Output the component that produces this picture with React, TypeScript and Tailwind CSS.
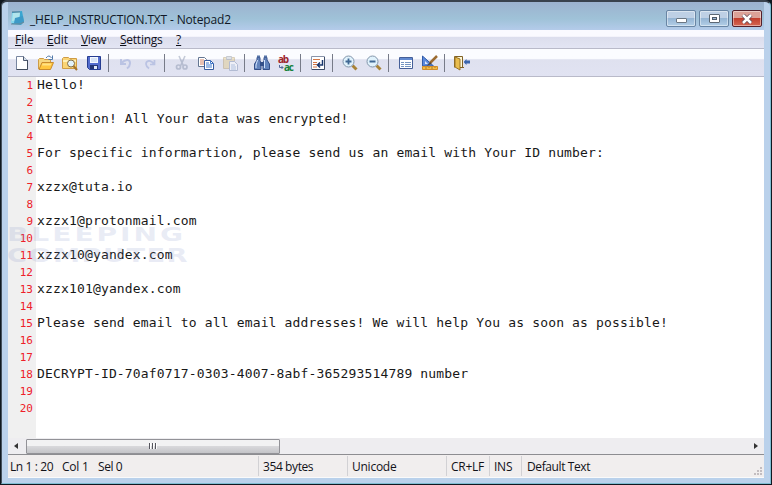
import type { ReactNode } from 'react';

const ui = "font-['Open_Sans','Noto_Sans',sans-serif]";
const mono = "font-['DejaVu_Sans_Mono','Liberation_Mono',monospace]";

const lines = [
  'Hello!', '', 'Attention! All Your data was encrypted!', '',
  'For specific informartion, please send us an email with Your ID number:', '',
  'xzzx@tuta.io', '', 'xzzx1@protonmail.com', '', 'xzzx10@yandex.com', '',
  'xzzx101@yandex.com', '',
  'Please send email to all email addresses! We will help You as soon as possible!',
  '', '', 'DECRYPT-ID-70af0717-0303-4007-8abf-365293514789 number', '', '',
];

function Tool({ children, faded }: { children: ReactNode; faded?: boolean }) {
  return (
    <div className={`flex w-6 shrink-0 items-center justify-center ${faded ? 'opacity-45' : ''}`}>
      <svg width="16" height="16" viewBox="0 0 16 16" fill="none" className="overflow-visible">{children}</svg>
    </div>
  );
}

function Sep() {
  return <div className="flex w-2 shrink-0 pl-[2px]"><div className="h-[18px] w-px bg-[#777b88]" /></div>;
}

function Toolbar() {
  return (
    <div className="flex h-[28px] shrink-0 items-center border-b border-[#b9bac9] bg-linear-to-b from-[#fbfcff] from-35% via-[#dfe1ef] via-40% to-[#e1e3f2] pt-px pl-[2px]">
      <Tool>
        <path d="M2.500 1.500h7l4 4v9h-11z" fill="#fff" stroke="#7886a0" />
        <path d="M9.500 1.500v4h4" fill="#d5dfeb" stroke="#4e5970" />
        <path d="M13.500 5v9.500h-11" stroke="#414b5d" />
      </Tool>
      <Tool>
        <path d="M.5 14V4.500l1-1h4l1 1h6V7" fill="#f6d780" stroke="#cf9c45" />
        <path d="M1 14.500 4 7.500h11.500l-3 7z" fill="#ffc63e" stroke="#c98b2e" />
        <path d="M4.500 8.500h9l-1 2H4z" fill="#ffe286" />
        <path d="M8 3q3-4 5.500 0M14.500.5v4h-4" stroke="#537baa" />
      </Tool>
      <Tool>
        <path d="M.5 13.500v-10l1-1h5l1 1h7v10z" fill="#fad475" stroke="#cf9c45" />
        <path d="M1 5h13v2H1z" fill="#fff0b5" />
        <circle cx="9" cy="8.500" r="3.500" fill="#e2f3fc" stroke="#836b42" />
        <path d="m11.500 11 3.500 4" stroke="#a6752b" strokeWidth="2" />
      </Tool>
      <Tool>
        <path d="M1.500 1.500h13v13h-11l-2-2z" fill="#526cce" stroke="#263d91" />
        <path d="M4 2h8v6H4z" fill="#f4f8ff" />
        <path d="M5 4h6M5 6h6" stroke="#b8cceb" />
        <path d="M4 10h8v4H4z" fill="#233574" />
        <path d="M8 11h3v3H8z" fill="#dfe8f8" />
      </Tool>
      <Sep />
      <Tool faded>
        <path d="M3 4v5h5M3.500 8C8 3.500 12.500 4.500 12 8.500c0 2-1 3.500-3 5" stroke="#8f9fd5" strokeWidth="2" />
      </Tool>
      <Tool faded>
        <path d="M12.500 5v4.500H8M12 9C8.500 4 4 5.500 4 9c0 2 1 3 3 4.500" stroke="#8f9fd5" strokeWidth="1.700" />
      </Tool>
      <Sep />
      <Tool faded>
        <path d="m5 1 4.500 10M11 1 6.500 11" stroke="#8490aa" strokeWidth="1.600" />
        <circle cx="4.500" cy="12" r="2" stroke="#8490aa" strokeWidth="1.700" />
        <circle cx="11" cy="12" r="2" stroke="#8490aa" strokeWidth="1.700" />
      </Tool>
      <Tool>
        <path d="M.5 2.500h6l2 2v7h-8z" fill="#fff" stroke="#647692" />
        <path d="M2 5h4M2 7h4M2 9h4" stroke="#d28264" />
        <path d="M6.500 5.500h6l3 3v6h-9z" fill="#fff" stroke="#365b9e" />
        <path d="M12.500 5.500v3h3M8 8h3M8 10h6M8 12h6" stroke="#427bce" />
      </Tool>
      <Tool faded>
        <path d="M1.500 2.500h11v11h-11z" fill="#e2c987" stroke="#b39b6a" />
        <path d="M4.500 1.500h5v3h-5z" fill="#bdc4ce" stroke="#888e98" />
        <path d="M7.500 6.500h5l3 3v6h-8z" fill="#fff" stroke="#7b8daf" />
        <path d="M9 10h4M9 12h5M9 14h5" stroke="#7b9bc9" />
      </Tool>
      <Sep />
      <Tool>
        <path d="M3 2.500h3v3l1 3v6H.5V9L3 5zM10 2.500h3V5l2.500 4v5.500H9v-6l1-3z" fill="#6384bd" stroke="#344f89" />
        <path d="M6 7h4v4H6z" fill="#344f89" />
        <path d="M3.500 5 2 10v3M10.500 5v8" stroke="#d2e4ff" />
        <path d="M3 1.500h3M10 1.500h3" stroke="#5674a8" strokeWidth="2" />
      </Tool>
      <Tool>
        <text x="0" y="8" fontSize="10" fontWeight="700" fill="#9e242c" textLength="11" className={ui}>ab</text>
        <text x="6" y="15.500" fontSize="10" fontWeight="700" fill="#16813b" textLength="10" className={ui}>ac</text>
        <path d="M1.500 10v2.500H5M3.500 11 5 12.500 3.500 14" stroke="#526998" />
      </Tool>
      <Sep />
      <Tool>
        <path d="M1.500 1.500h13v13h-13z" fill="#fff" stroke="#8994aa" />
        <path d="M14.500 2v12.500H2" stroke="#3e4c68" />
        <path d="M3 4.500h7M3 7.500h4M3 9.500h4M3 12h4" stroke="#d57746" />
        <path d="M12.500 5v5H8M10 7.500 7.500 10l2.500 2.500" stroke="#18366e" strokeWidth="1.500" />
      </Tool>
      <Sep />
      <Tool>
        <path d="m10.500 10.500 4 4" stroke="#a88337" strokeWidth="3" />
        <circle cx="6.500" cy="6.500" r="5.500" fill="#e0f2fc" stroke="#8295aa" />
        <path d="M3.500 6.500h6M6.500 3.500v6" stroke="#3f6894" strokeWidth="1.800" />
      </Tool>
      <Tool>
        <path d="m10.500 10.500 4 4" stroke="#a88337" strokeWidth="3" />
        <circle cx="6.500" cy="6.500" r="5.500" fill="#e0f2fc" stroke="#8295aa" />
        <path d="M3.500 6.500h6" stroke="#3f6894" strokeWidth="1.800" />
      </Tool>
      <Sep />
      <Tool>
        <path d="M1.500 2.500h13v11h-13z" fill="#fff" stroke="#455f98" />
        <path d="M2 3h12v2H2z" fill="#6189d0" />
        <path d="M3 7.500h3M3 9.500h3M3 11.500h3M7 7.500h6M7 9.500h6M7 11.500h6" stroke="#7595c1" />
      </Tool>
      <Tool>
        <path d="M.5 1v10h11z" fill="#5b89dc" stroke="#315ba9" />
        <path d="M3 6v3h3z" fill="#dce8fc" />
        <path d="m15 1-7 7" stroke="#9b6b31" strokeWidth="2.500" />
        <path d="m8.500 7-4 4 5-2z" fill="#514535" />
        <path d="M.5 11.500h15v3H.5z" fill="#f5bc42" stroke="#cf8c2c" />
        <path d="M4 12v2M7 12v1M10 12v2M13 12v1" stroke="#a57b35" />
      </Tool>
      <Sep />
      <Tool>
        <path d="M.5 12.500v-11h8v11" fill="#fdf8d9" stroke="#816226" />
        <path d="M1 2l5 2v11l-5-3z" fill="#e9bd4e" stroke="#9b7425" />
        <path d="M6 12.500h4" stroke="#816226" />
        <path d="M10 6.500 12.500 4v1.500H16v3h-3.500V10L10 7.500z" fill="#3b65ad" />
      </Tool>
    </div>
  );
}

function TitleBar() {
  return (
    <div className="flex h-[28px] shrink-0 bg-linear-to-b from-[#9cb2cf] via-[#9fc2d8] via-60% to-[#b4cbea] pl-[2px]">
      <svg width="16" height="17" viewBox="0 0 16 17" className="mt-[8px] shrink-0">
        <path d="m2 2 10-1 2 11-3 3-9-1z" fill="#39a6d0" />
        <path d="M2 3h8l-1 10H1z" fill="#83d6ec" />
        <path d="m3 3 7-1-1 8-7 1z" fill="#b0e5ec" />
        <path d="m5 8 8-2 1 6-5 2-5-1z" fill="#3d9ac7" />
        <path d="M3 1v2M5 1v2M7 1v2M9 1v2" stroke="#597d91" />
        <path d="M1 14h9l4-2" stroke="#6f8796" fill="none" />
      </svg>
      <div className={`${ui} ml-[4px] mt-[8px] text-[12px] leading-[20px] tracking-[-0.160px] whitespace-pre text-[#111827]`}>_HELP_INSTRUCTION.TXT - Notepad2</div>
      <div className="mt-[8px] mr-[2px] ml-auto flex h-[17px] gap-[3px]">
        {[0, 1, 2].map((n) => (
          <div key={n} className={`flex w-[30px] items-center justify-center rounded-[2px] border shadow-[inset_0_0_0_1px_#ffffff70] ${n === 2 ? 'border-[#54202b] bg-linear-to-b from-[#dca197] from-45% via-[#c23e2d] via-50% to-[#d46653]' : 'border-[#6985a4] bg-linear-to-b from-[#bed0e5] from-45% via-[#95b5d4] via-50% to-[#b3cfe7]'}`}>
            {n === 0 && <div className="mt-1 h-[5px] w-[11px] rounded-[1px] border border-[#6b7783] bg-white" />}
            {n === 1 && <div className="flex h-[9px] w-[11px] items-center justify-center rounded-[1px] border border-[#5c6874] bg-white"><div className="h-[3px] w-[5px] border border-[#505b67] bg-[#9bb8d7]" /></div>}
            {n === 2 && <svg width="12" height="10" viewBox="0 0 12 10"><path d="m2 1 8 8m0-8-8 8" stroke="#604653" strokeWidth="4" /><path d="m2 1 8 8m0-8-8 8" stroke="#fff" strokeWidth="2.500" /></svg>}
          </div>
        ))}
      </div>
    </div>
  );
}

function Watermark() {
  return (
    <svg width="182" height="42" viewBox="0 0 182 42" className="absolute top-[147px] left-0 overflow-visible font-['DejaVu_Sans',sans-serif] opacity-[0.17]">
      <g fill="#7f8dc5" fontSize="19" fontWeight="700">
        <text x="-1" y="17" textLength="179" lengthAdjust="spacingAndGlyphs" letterSpacing="2">BLEEPING</text>
        <text x="-1" y="38" textLength="182" lengthAdjust="spacingAndGlyphs" letterSpacing="1">COMPUTER</text>
      </g>
    </svg>
  );
}

export default function App() {
  return (
    <div className="h-[485px] w-[772px] overflow-hidden bg-[#101820]">
      <div className="ml-px flex h-[484px] w-[770px] flex-col overflow-hidden rounded-t-[6px] border border-t-2 border-[#7fbdd2] border-t-[#39424e] border-l-[#45515d] bg-[#bad1eb] px-[6px]">
        <TitleBar />
        <div className="flex h-[448px] w-[756px] shrink-0 flex-col bg-white">
          <div className={`${ui} flex h-[19px] shrink-0 border-b border-[#b9bac9] bg-linear-to-b from-[#fafaff] from-35% via-[#dcdeed] via-40% to-[#e3e5f3] pl-[7px] text-[12px] leading-[20px] text-[#10101b]`}>
            <div className="w-[32px] tracking-[-0.1px]"><u>F</u>ile</div>
            <div className="w-[34px] tracking-[-0.1px]"><u>E</u>dit</div>
            <div className="w-[39px] tracking-[-0.350px]"><u>V</u>iew</div>
            <div className="w-[56px] tracking-[-0.250px]"><u>S</u>ettings</div>
            <div><u>?</u></div>
          </div>
          <Toolbar />
          <div className="relative flex h-[361px] shrink-0 overflow-hidden bg-white">
            <div className={`${mono} w-[28px] shrink-0 bg-[#f0f0f0] pr-[3px] text-right text-[11px] leading-[17px] text-[#ee2029]`}>
              {lines.map((_, i) => <div key={i}>{i + 1}</div>)}
            </div>
            <div className={`${mono} -mt-px pl-px text-[13px] leading-[17px] tracking-[0.160px] whitespace-pre text-[#181818]`}>
              {lines.map((line, i) => <div key={i} className="h-[17px]">{line}</div>)}
            </div>
            <Watermark />
          </div>
          <div className="flex h-[16px] shrink-0 items-center bg-[#eeedf0]">
            <div className="flex w-[18px] justify-center"><div className="mr-[3px] border-y-[3px] border-r-[4px] border-y-transparent border-r-[#333]" /></div>
            <div className="flex h-[15px] w-[254px] items-center justify-center gap-px rounded-[1px] border border-[#929297] bg-linear-to-b from-[#f2f2f3] from-45% via-[#d8d8db] via-50% to-[#c4c4c8]">
              {[0, 1, 2].map((n) => <div key={n} className="h-[6px] w-[2px] border-l border-[#55555d] bg-white" />)}
            </div>
            <div className="mr-[6px] ml-auto border-y-[3px] border-l-[4px] border-y-transparent border-l-[#333]" />
          </div>
          <div className={`${ui} flex h-[24px] shrink-0 items-center border-t border-b border-t-[#8d8d91] border-b-[#fafafa] bg-[#f1eeee] text-[12px] leading-[22px] tracking-[-0.250px] whitespace-pre text-[#121219]`}>
            <div className="flex h-[20px] w-[251px] border-r border-[#d2d1d4] pl-[2px]"><span className="w-[52px] tracking-[-0.400px]">Ln 1 : 20</span><span className="w-[36px]">Col 1</span><span className="tracking-[-0.450px]">Sel 0</span></div>
            <div className="h-[20px] w-[89px] border-r border-[#d2d1d4] pl-[4px] tracking-[-0.400px]">354 bytes</div>
            <div className="h-[20px] w-[99px] border-r border-[#d2d1d4] pl-[4px]">Unicode</div>
            <div className="h-[20px] w-[43px] border-r border-[#d2d1d4] pl-[4px]">CR+LF</div>
            <div className="h-[20px] w-[32px] border-r border-[#d2d1d4] pl-[4px]">INS</div>
            <div className="h-[20px] pl-[5px] tracking-[-0.400px]">Default Text</div>
            <svg width="9" height="9" viewBox="0 0 9 9" className="mt-[11px] mr-px ml-auto"><path d="M6 0h2v2H6zM3 3h2v2H3zM6 3h2v2H6zM0 6h2v2H0zM3 6h2v2H3zM6 6h2v2H6z" fill="#c3bdc0" /></svg>
          </div>
        </div>
      </div>
    </div>
  );
}
